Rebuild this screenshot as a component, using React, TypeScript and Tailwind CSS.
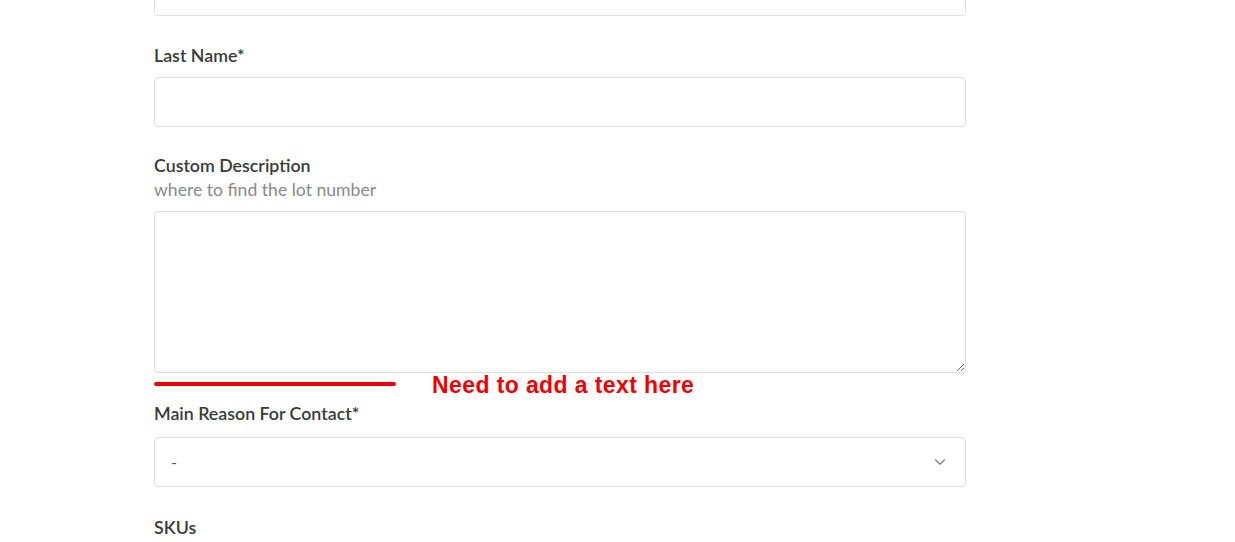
import { ChevronDown } from 'lucide-react'

const labelCls = 'block text-[17.8px] leading-6 font-semibold text-[#3a3a3a]'
const inputCls =
  'block w-full h-[50px] rounded-[4px] border border-[#dedede] bg-white px-4 text-[16px] text-[#333] outline-none'

export default function App() {
  return (
    <div
      className="min-h-[542px] bg-white overflow-hidden"
      style={{ fontFamily: 'Lato, "Open Sans", sans-serif' }}
    >
      <div className="ml-[154px] w-[812px] flex flex-col">
        {/* First Name input (scrolled off top) */}
        <input className={`${inputCls} -mt-[34px]`} />

        {/* Last Name */}
        <div className="mt-[27px]">
          <label className={labelCls}>Last Name*</label>
          <input className={`${inputCls} mt-[10px]`} />
        </div>

        {/* Custom Description */}
        <div className="mt-[26px]">
          <label className={labelCls}>Custom Description</label>
          <p className="text-[17.6px] leading-6 text-[#8a8a8a] mt-[1px]">where to find the lot number</p>
          <div className="relative mt-[9px]">
            <textarea className="block w-full h-[162px] rounded-[4px] border border-[#dedede] bg-white px-4 py-3 text-[16px] outline-none" />
            {/* annotation overlay */}
            <div className="absolute left-0 top-[171px] w-[242px] h-[4px] rounded-full bg-[#f00000]" />
            <div
              className="absolute left-[278px] top-[162px] text-[23px] leading-6 font-bold tracking-[0.4px] text-[#ee0000] whitespace-nowrap"
              style={{ fontFamily: '"Liberation Sans", Arial, sans-serif' }}
            >
              Need to add a text here
            </div>
          </div>
        </div>

        {/* Main Reason For Contact */}
        <div className="mt-[28px]">
          <label className={labelCls}>Main Reason For Contact*</label>
          <div className="relative mt-[12px]">
            <div className={`${inputCls} flex items-center`}>
              <span className="text-[#555]">-</span>
            </div>
            <ChevronDown
              className="absolute right-[17px] top-[16px] text-[#777]"
              size={18}
              strokeWidth={1.5}
            />
          </div>
        </div>

        {/* SKUs */}
        <div className="mt-[28px]">
          <label className={labelCls}>SKUs</label>
        </div>
      </div>
    </div>
  )
}
